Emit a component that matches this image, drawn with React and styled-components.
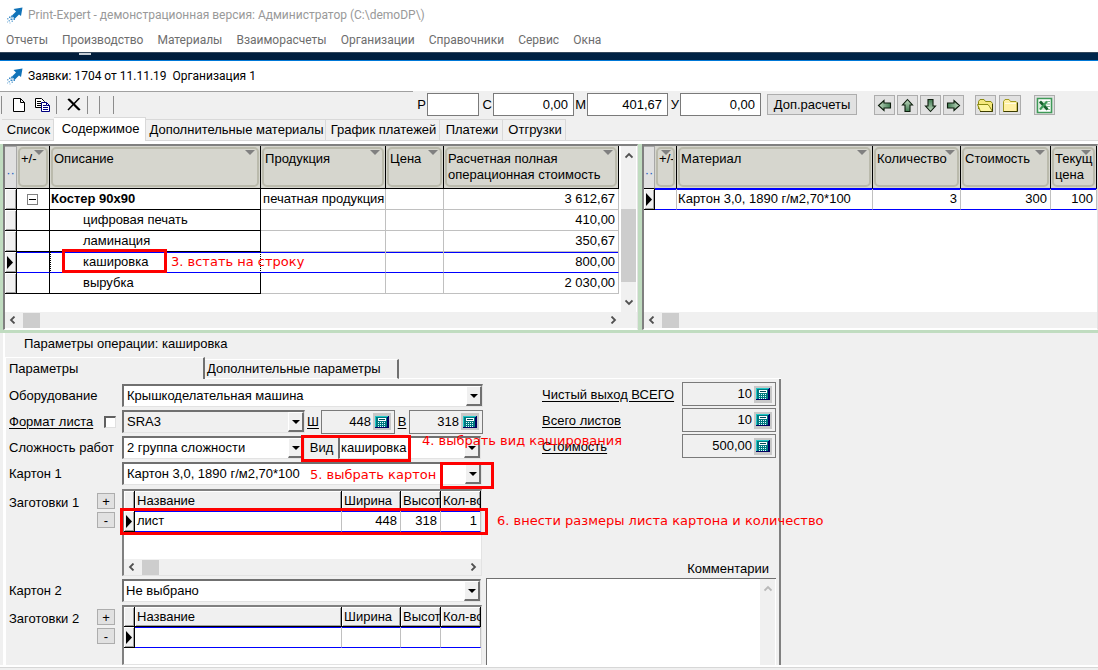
import React from "react";
import styled, { createGlobalStyle, css } from "styled-components";

const GlobalStyle = createGlobalStyle`
  *, *::before, *::after { box-sizing: border-box; }
  body { margin: 0; background: #f0f0f0; }
  body, button, input, select, textarea {
    font-family: "Liberation Sans", Arial, sans-serif;
    font-size: 13px;
    line-height: 16px;
    color: #000;
  }
  button, input, select, textarea { margin: 0; padding: 0; border-radius: 0; }
`;

const App = styled.div`
  display: flex;
  flex-direction: column;
  min-height: 100vh;
`;

/* ---------- window captions and menu ---------- */

const Caption = styled.header`
  display: flex;
  align-items: center;
  gap: 5px;
  height: 30px;
  padding-left: 7px;
  background: #fff;
  color: ${(p) => (p.$inactive ? "#999" : "#000")};
  font: 12px/16px Roboto, sans-serif;
  white-space: pre;
`;

const Menu = styled.nav`
  display: flex;
  align-items: center;
  gap: 14px;
  height: 22px;
  padding: 0 6px 2px;
  background: #fff;
`;

const MenuItem = styled.button`
  border: 0;
  background: none;
  color: #6d6d6d;
  font: 12px/16px Roboto, sans-serif;
`;

const Backdrop = styled.div`
  height: 9px;
  background: linear-gradient(90deg, #001c3a, #00264b);
  border-top: 1px solid #33475c;
  border-bottom: 1px solid #0078d7;
`;

const Sliver = styled.div`
  width: 12px;
  height: 2px;
  margin-left: 79px;
  background: #c5cdd6;
`;

/* ---------- toolbar ---------- */

const Toolbar = styled.div`
  display: flex;
  align-items: center;
  height: 26px;
  background: #f0f0f0;
`;

const ToolGroup = styled.div`
  display: flex;
  align-items: center;
  width: 413px;
  height: 26px;
  padding-left: 1px;
  border-top: 1px solid #a0a0a0;
`;

const Divider = styled.span`
  width: 1px;
  height: 18px;
  margin-right: ${(p) => p.$gap || 0}px;
  background: #8c8c8c;
`;

const FlatButton = styled.button`
  display: flex;
  align-items: center;
  justify-content: center;
  width: ${(p) => p.$w}px;
  height: 22px;
  border: 0;
  background: none;
`;

const TotalLabel = styled.label`
  display: flex;
  align-items: center;
  justify-content: flex-end;
  width: ${(p) => p.$w}px;
  padding-right: 1px;
  padding-top: 2px;
`;

const TotalInput = styled.input`
  width: ${(p) => p.$w}px;
  height: 23px;
  margin-top: 1px;
  padding-right: 5px;
  border: 1px solid #7a7a7a;
  background: #fff;
  text-align: right;
`;

const PushButton = styled.button`
  width: 90px;
  height: 21px;
  margin: 1px 17px 0 6px;
  border: 1px solid #adadad;
  background: #e1e1e1;
`;

const IconButton = styled.button`
  display: flex;
  align-items: center;
  justify-content: center;
  width: ${(p) => p.$w || 21}px;
  height: 20px;
  margin: 2px ${(p) => p.$gap || 2}px 0 0;
  border: 1px solid #adadad;
  background: #e1e1e1;
`;

/* ---------- top tabs ---------- */

const TabStrip = styled.div`
  display: flex;
  align-items: flex-end;
  height: 24px;
  padding-left: 2px;
  border-bottom: 1px solid #d9d9d9;
`;

const Tab = styled.button`
  width: ${(p) => p.$w}px;
  height: 21px;
  border: 1px solid #d9d9d9;
  border-width: 1px 1px 0 0;
  background: #f0f0f0;
  padding-left: 2px;
  white-space: nowrap;
  ${(p) =>
    p.$selected &&
    css`
      height: 24px;
      margin-bottom: -1px;
      padding-bottom: 2px;
      background: #fff;
    `}
`;

/* ---------- grids ---------- */

const Split = styled.div`
  display: grid;
  grid-template-columns: 58% 4px minmax(0, 1fr);
  height: 192px;
  padding: 3px 0 3px 3px;
  background: linear-gradient(#fff 3px, #c0dcc0 3px);
`;

const GridPanel = styled.section`
  display: flex;
  flex-direction: column;
  min-width: 0;
  padding-bottom: 1px;
  overflow: hidden;
  border: solid #808080;
  border-width: 2px 1px 1px 2px;
  border-right-color: #e3e3e3;
  border-bottom-color: #fff;
  background: #fff;
`;

const GridBody = styled.div`
  display: flex;
  flex: 1;
  min-height: 0;
  align-items: stretch;
`;

const TableWrap = styled.div`
  flex: 1;
  min-width: 0;
  padding-right: ${(p) => p.$end || 0}px;
`;

const Table = styled.table`
  width: 100%;
  table-layout: fixed;
  border-collapse: separate;
  border-spacing: 0;
  white-space: nowrap;
`;

const HeadCell = styled.th`
  height: 43px;
  padding: 0;
  border-right: 1px solid #000;
  border-bottom: 1px solid ${(p) => (p.$blue ? "#0000ff" : "#000")};
  background: #d6d6ce;
  font-weight: normal;
  text-align: left;
  vertical-align: top;
`;

const HeadBox = styled.div`
  position: relative;
  height: 40px;
  margin: 1px;
  padding: 2px 0 0 1px;
  overflow: hidden;
  border: 2px solid #babaac;
  border-radius: 5px;
  white-space: pre;
`;

const HeadArrow = styled.span`
  position: absolute;
  top: 1px;
  right: 2px;
  border: 5px solid transparent;
  border-top-color: #808080;
  border-bottom: 0;
`;

const Corner = styled.th`
  padding: 10px 0 0;
  border: 1px solid #a8a8a8;
  border-left: 0;
  border-bottom: 1px solid #000;
  background: #e0e0e0;
  color: #2060c0;
  font-weight: normal;
  line-height: 10px;
  text-align: center;
`;

const Cell = styled.td`
  position: relative;
  height: 21px;
  padding: 0 3px 0 ${(p) => p.$indent || 2}px;
  border-right: 1px solid #c0c0c0;
  border-bottom: 1px solid #c0c0c0;
  font-weight: ${(p) => (p.$bold ? "bold" : "normal")};
  text-align: ${(p) => (p.$right ? "right" : "left")};
  ${(p) => p.$tree && "border-color: #000;"}
  ${(p) => p.$current && "box-shadow: inset 0 1px #0000ff; border-bottom-color: #0000ff;"}
  ${(p) => p.$focus && "border-left: 1px dotted #000; border-right: 1px dotted #000;"}
`;

const Marker = styled.td`
  height: 21px;
  padding: 0;
  border-right: 1px solid #000;
  border-bottom: 1px solid #000;
  background: #f0f0f0;
  box-shadow: inset 1px 1px #fff, inset -1px -1px #a0a0a0;
  line-height: 0;
`;

const TreeToggle = styled.button`
  display: flex;
  align-items: center;
  justify-content: center;
  width: 11px;
  height: 11px;
  margin-left: 8px;
  border: 1px solid #808080;
  background: #fff;

  &::before { content: ""; width: 7px; height: 1px; background: #000; }
`;

const VScroll = styled.div`
  display: flex;
  flex-direction: column;
  justify-content: space-between;
  align-items: center;
  width: 15px;
  margin-right: 1px;
  padding: 6px 0;
  background: #f0f0f0;
`;

const VThumb = styled.div`
  width: 15px;
  height: 73px;
  margin-top: 33px;
  background: #cdcdcd;
`;

const HScroll = styled.div`
  display: flex;
  align-items: center;
  gap: 6px;
  height: 16px;
  padding: 0 ${(p) => p.$end || 4}px 0 4px;
  background: #f0f0f0;
`;

const HThumb = styled.div`
  width: 17px;
  height: 15px;
  margin-right: auto;
  background: #cdcdcd;
`;

/* ---------- operation parameters ---------- */

const Details = styled.main`
  display: flex;
  flex-direction: column;
  flex: 1;
  margin-left: 3px;
  border-left: 2px solid #fff;
`;

const DetailsTitle = styled.h2`
  height: 24px;
  margin: 0;
  padding: 3px 0 0 19px;
  font-size: 13px;
  font-weight: normal;
`;

const PageTabs = styled.div`
  display: flex;
  align-items: flex-end;
  width: 71%;
  height: 22px;
`;

const PageTab = styled.button`
  width: ${(p) => p.$w}px;
  height: ${(p) => (p.$selected ? 22 : 20)}px;
  padding-left: ${(p) => (p.$selected ? 3 : 2)}px;
  border: solid #fff;
  border-width: 1px 2px ${(p) => (p.$selected ? 0 : 1)}px ${(p) => (p.$selected ? 1 : 0)}px;
  border-right-color: #707070;
  background: #f0f0f0;
  text-align: left;
`;

const TabRule = styled.div`
  flex: 1;
  height: 1px;
  background: #fff;
`;

const Page = styled.div`
  display: flex;
  flex: 1;
  width: 71%;
  padding-right: 3px;
  border-left: 1px solid #fff;
  border-right: 2px solid #808080;
`;

const Fields = styled.div`
  display: flex;
  flex-direction: column;
  gap: 3px;
  flex: none;
  width: 478px;
  padding: 5px 0 0 3px;
`;

const Field = styled.div`
  position: relative;
  display: flex;
  align-items: center;
  height: 23px;
`;

const FieldLabel = styled.label`
  width: ${(p) => p.$w}px;
  flex: none;
  text-decoration: ${(p) => (p.$link ? "underline" : "none")};
  text-align: ${(p) => (p.$center ? "center" : "left")};
  text-underline-offset: 2px;
`;

const CheckBox = styled.input`
  appearance: none;
  width: 12px;
  height: 12px;
  margin-right: 6px;
  border: 2px solid #606060;
  border-right: 1px solid #e0e0e0;
  border-bottom: 1px solid #e0e0e0;
  background: #fff;
`;

const ComboBox = styled.div`
  display: flex;
  width: ${(p) => p.$w}px;
  height: 23px;
  border: solid #707070;
  border-width: 2px 1px 1px 2px;
  border-right-color: #e3e3e3;
  border-bottom-color: #e3e3e3;
  background: ${(p) => (p.$gray ? "#f0f0f0" : "#fff")};
`;

const Select = styled.select`
  appearance: none;
  flex: 1;
  min-width: 0;
  padding-left: ${(p) => p.$pad || 3}px;
  border: 0;
  background: transparent;
`;

const DropMark = styled.span`
  display: flex;
  align-items: center;
  justify-content: center;
  width: 16px;
  border: 1px solid #fff;
  border-right: 2px solid #707070;
  border-bottom: 2px solid #707070;
  background: #f0f0f0;

  &::before {
    content: "";
    border: 4px solid transparent;
    border-top-color: #000;
    border-bottom: 0;
  }
`;

const NumberBox = styled.div`
  display: flex;
  align-items: center;
  width: ${(p) => p.$w}px;
  height: 24px;
  padding-right: 3px;
  border: 1px solid #7a7a7a;
  background: #f0f0f0;
`;

const NumberInput = styled.input`
  flex: 1;
  min-width: 0;
  padding-right: 2px;
  border: 0;
  background: none;
  text-align: right;
`;

const CalcButton = styled.button`
  display: flex;
  align-items: center;
  justify-content: center;
  width: 18px;
  height: 17px;
  border: 0;
  background: #c8c8c8;
`;

const ListField = styled.div`
  position: relative;
  display: flex;
  align-items: flex-start;
  flex: ${(p) => (p.$grow ? "1" : "none")};
  height: ${(p) => (p.$grow ? "auto" : "87px")};
  margin-top: ${(p) => (p.$grow ? 0 : 1)}px;
`;

const ListLabel = styled.span`
  width: 88px;
  padding-top: 6px;
`;

const SmallButtons = styled.div`
  display: flex;
  flex-direction: column;
  gap: 3px;
  width: 25px;
  padding-top: 4px;
`;

const SmallButton = styled.button`
  width: 18px;
  height: 16px;
  border: 1px solid #adadad;
  background: #e1e1e1;
  line-height: 13px;
`;

const ListBox = styled.div`
  display: flex;
  flex-direction: column;
  justify-content: space-between;
  align-self: stretch;
  width: 360px;
  border: solid #808080;
  border-width: 2px 1px 1px 2px;
  border-right-color: #e3e3e3;
  border-bottom-color: #e3e3e3;
  background: #fff;
`;

const ListHead = styled.th`
  height: 20px;
  padding: 0 0 0 2px;
  overflow: hidden;
  border-right: 1px solid #000;
  border-bottom: 1px solid #000;
  background: #f0f0f0;
  box-shadow: inset 1px 1px #fff, inset -1px -1px #a0a0a0;
  font-weight: normal;
  text-align: left;
`;

const Results = styled.div`
  display: flex;
  flex: 1;
  flex-direction: column;
  gap: 2px;
  min-width: 0;
  padding: 3px 0 0 2px;
`;

const Result = styled.div`
  display: flex;
  align-items: center;
  justify-content: space-between;
  padding-left: 56px;
`;

const ResultLink = styled.a`
  color: #000;
  text-underline-offset: 2px;
  padding-top: 2px;
`;

const CommentLabel = styled.label`
  margin: 101px 7px 0 auto;
`;

const CommentBox = styled.div`
  display: flex;
  flex: 1;
  margin-top: -1px;
  border: solid #707070;
  border-width: 1px 0 0 1px;
  background: #fff;
`;

const TextArea = styled.textarea`
  flex: 1;
  min-width: 0;
  border: 0;
  resize: none;
  outline: 0;
`;

const StatusBar = styled.footer`
  height: 5px;
  border: solid #fff;
  border-width: 2px 0 0;
  background: linear-gradient(#d7d7d7 1px, #f0f0f0 1px);
`;

/* ---------- red tutorial marks ---------- */

const Frame = styled.span`
  position: absolute;
  z-index: 2;
  left: ${(p) => p.$x}px;
  top: ${(p) => p.$y}px;
  width: ${(p) => p.$w}px;
  height: ${(p) => p.$h}px;
  border: 3px solid #fe0000;
  pointer-events: none;
`;

const Note = styled.span`
  position: absolute;
  z-index: 3;
  left: ${(p) => p.$x}px;
  top: ${(p) => p.$y}px;
  color: #fe0000;
  font: 13px/18px "DejaVu Sans", sans-serif;
  font-weight: normal;
  white-space: nowrap;
  pointer-events: none;
`;

/* ---------- icons ---------- */

const Rocket = () => (
  <svg width="16" height="18" viewBox="0 0 16 18">
    <path d="M15.500 1.500 14 10 12 8.500 8 12.500 6.500 11.500 5 9.500 9 5.500 6.500 3z" fill="#1173b8" />
    <path d="M4 9.500h2v2H4zM6.500 12h1.500v2H6.500zM2 10.500h1.500V12H2zM3.500 12.500h2v1.500h-2z" fill="#3d8cc8" />
    <path d="M0 12h1.500v1.500H0zM1.500 14H3v1.500H1.500zM4.500 14.500H6V16H4.500zM0 15.500h1v1H0zM2.500 16.500h1v1h-1z" fill="#7fb4dc" />
  </svg>
);

const NewDoc = () => (
  <svg width="12" height="14" viewBox="0 0 12 14">
    <path d="M.5.5h7l4 4v9H.5zM7.500.5v4h4" fill="#fff" stroke="#000" />
  </svg>
);

const CopyDoc = () => (
  <svg width="16" height="14" viewBox="0 0 16 14">
    <path d="M.5.5h6l3 3v6h-9z" fill="#fff" stroke="#000" />
    <path d="M2 3.500h4M2 5.500h5M2 7.500h5" stroke="#000" />
    <path d="M6.500 4.500h5l3 3v6h-8z" fill="#fff" stroke="#000080" />
    <path d="M8 7.500h3M8 9.500h5M8 11.500h5M11.500 4.500v3h3" stroke="#000080" fill="none" />
  </svg>
);

const Cross = () => (
  <svg width="14" height="13" viewBox="0 0 14 13">
    <path d="M1 1 12 12M2 1l11 11M12.500 0 1 12" stroke="#000" strokeWidth="1.500" />
  </svg>
);

const ArrowIcon = ({ turn }) => (
  <svg width="15" height="15" viewBox="0 0 15 15">
    <defs>
      <linearGradient id={`arrow${turn}`} x1="0" y1="0" x2="1" y2="0">
        <stop offset="0" stopColor="#c4dcc4" />
        <stop offset="1" stopColor="#3f7a50" />
      </linearGradient>
    </defs>
    <g transform={`rotate(${turn} 7.500 7.500)`}>
      <path
        d="M1.500 7.500 7 2.500v2.500h6.500v5H7v2.500z"
        fill={`url(#arrow${turn})`}
        stroke="#0c1c0c"
        strokeWidth="1.100"
      />
    </g>
  </svg>
);

const Folder = ({ open }) => (
  <svg width="17" height="15" viewBox="0 0 17 15">
    {open ? (
      <>
        <path d="M1.500 11V3.500l1.500-2h4l1.500 2H14l1.500 2V13" fill="#f5e87c" stroke="#8a8a10" />
        <path d="M.5 6.500h10.500l1.500 2 3 5H3.500z" fill="#fdf6a0" stroke="#8a8a10" />
        <path d="M15.500 6v7.500H3" fill="none" stroke="#3c3c00" />
      </>
    ) : (
      <>
        <path d="M1.500 13.500V3.500l1.500-2h4l1.500 2h5.500l1 1v9z" fill="#fff0a4" stroke="#a09a20" />
        <path d="M3 5.500h11" stroke="#fffbe0" />
        <path d="M15.500 4.500v9h-14" fill="none" stroke="#3c3c00" />
      </>
    )}
  </svg>
);

const Excel = () => (
  <svg width="17" height="17" viewBox="0 0 17 17">
    <path d="M1.500 1.500h14v14h-14z" fill="#fff" stroke="#3f9a58" strokeWidth="1.600" />
    <path d="M3 4h8v9H3z" fill="#d8ebd8" />
    <path d="M11 4.500h3M11 7h3M11 9.500h3M11 12.500h3" stroke="#7fb58c" />
    <path d="m4 4.500 7.500 8" stroke="#14602c" strokeWidth="2.600" />
    <path d="M11 4.500l-7 8" stroke="#3c9a58" strokeWidth="2" />
  </svg>
);

const Calculator = () => (
  <svg width="14" height="12" viewBox="0 0 14 12">
    <path d="M0 0h14v12H0z" fill="#000060" />
    <path d="M0 0h13v1H1v10H0z" fill="#20c8c8" />
    <path d="M1 1h11v10H1z" fill="#007880" />
    <path d="M3 2h8v3H3z" fill="#fff" />
    <path d="M4 3h6v1H4z" fill="#004858" />
    <path d="M3 6.500h8M3 8.500h8M3 10.500h8" stroke="#e0ffff" strokeDasharray="1 1" />
  </svg>
);

const turns = { left: 0, up: 90, right: 180, down: 270 };

const Chevron = ({ dir, color = "#505050" }) => (
  <svg width="8" height="8" viewBox="0 0 8 8">
    <path d="M5.500.5 2 4l3.500 3.500" fill="none" stroke={color} strokeWidth="1.800" transform={`rotate(${turns[dir]} 4 4)`} />
  </svg>
);

const CurrentRow = () => (
  <svg width="9" height="13" viewBox="0 0 9 13">
    <path d="M2 0v13l6-6.500z" fill="#000" />
  </svg>
);

/* ---------- composed parts ---------- */

const Head = ({ children, blue }) => (
  <HeadCell $blue={blue}>
    <HeadBox>
      {children}
      <HeadArrow />
    </HeadBox>
  </HeadCell>
);

const Columns = ({ widths }) => (
  <colgroup>
    {widths.map((w, i) => (
      <col key={i} width={w || undefined} />
    ))}
  </colgroup>
);

const HorizontalScroll = ({ end, noEnd }) => (
  <HScroll $end={end}>
    <Chevron dir="left" />
    <HThumb />
    {!noEnd && <Chevron dir="right" />}
  </HScroll>
);

const Combo = ({ id, w, gray, pad, value, label }) => (
  <ComboBox $w={w} $gray={gray}>
    <Select id={id} $pad={pad} aria-label={label}>
      <option>{value}</option>
    </Select>
    <DropMark />
  </ComboBox>
);

const NumberField = ({ id, w, value, label }) => (
  <NumberBox $w={w}>
    <NumberInput id={id} defaultValue={value} aria-label={label} />
    <CalcButton aria-label="Калькулятор">
      <Calculator />
    </CalcButton>
  </NumberBox>
);

const menu = ["Отчеты", "Производство", "Материалы", "Взаиморасчеты", "Организации", "Справочники", "Сервис", "Окна"];

const totals = [
  { name: "Р", gap: 14, w: 52, value: "" },
  { name: "С", gap: 14, w: 81, value: "0,00" },
  { name: "М", gap: 13, w: 81, value: "401,67" },
  { name: "У", gap: 12, w: 81, value: "0,00" },
];

const tabs = [
  ["Список", 52],
  ["Содержимое", 92],
  ["Дополнительные материалы", 180],
  ["График платежей", 114],
  ["Платежи", 63],
  ["Отгрузки", 63],
];

const operations = [
  { name: "Костер 90х90", product: "печатная продукция", cost: "3 612,67", root: true },
  { name: "цифровая печать", cost: "410,00" },
  { name: "ламинация", cost: "350,67" },
  { name: "кашировка", cost: "800,00", current: true },
  { name: "вырубка", cost: "2 030,00" },
];

const results = [
  ["Чистый выход ВСЕГО", "10"],
  ["Всего листов", "10"],
  ["Стоимость", "500,00"],
];

const Operations = () => (
  <GridPanel>
    <GridBody>
      <TableWrap $end={2}>
        <Table>
          <Columns widths={[12, 33, 0, 125, 58, 175]} />
          <thead>
            <tr>
              <Corner>··</Corner>
              <Head>+/-</Head>
              <Head>Описание</Head>
              <Head>Продукция</Head>
              <Head>Цена</Head>
              <Head>{"Расчетная полная\nоперационная стоимость"}</Head>
            </tr>
          </thead>
          <tbody>
            {operations.map((o) => (
              <tr key={o.name}>
                <Marker>{o.current && <CurrentRow />}</Marker>
                <Cell $tree $current={o.current}>{o.root && <TreeToggle aria-label="Свернуть" />}</Cell>
                <Cell
                  $tree
                  $bold={o.root}
                  $indent={o.root ? 1 : o.current ? 32 : 33}
                  $current={o.current}
                  $focus={o.current}
                >
                  {o.name}
                  {o.current && (
                    <>
                      <Frame $x={11} $y={-3} $w={105} $h={24} />
                      <Note $x={120} $y={1}>3. встать на строку</Note>
                    </>
                  )}
                </Cell>
                <Cell $current={o.current}>{o.product}</Cell>
                <Cell $current={o.current} />
                <Cell $right $current={o.current}>{o.cost}</Cell>
              </tr>
            ))}
          </tbody>
        </Table>
      </TableWrap>
      <VScroll>
        <Chevron dir="up" />
        <VThumb />
        <Chevron dir="down" />
      </VScroll>
    </GridBody>
    <HorizontalScroll end={20} />
  </GridPanel>
);

const Materials = () => (
  <GridPanel>
    <GridBody>
      <TableWrap>
        <Table>
          <Columns widths={[11, 22, 0, 88, 90, 46]} />
          <thead>
            <tr>
              <Corner>··</Corner>
              <Head blue>+/-</Head>
              <Head blue>Материал</Head>
              <Head blue>Количество</Head>
              <Head blue>Стоимость</Head>
              <Head blue>{"Текущ\nцена"}</Head>
            </tr>
          </thead>
          <tbody>
            <tr>
              <Marker><CurrentRow /></Marker>
              <Cell $current />
              <Cell $current $indent={1}>Картон 3,0, 1890 г/м2,70*100</Cell>
              <Cell $current $right>3</Cell>
              <Cell $current $right>300</Cell>
              <Cell $current $right>100</Cell>
            </tr>
          </tbody>
        </Table>
      </TableWrap>
    </GridBody>
    <HorizontalScroll noEnd />
  </GridPanel>
);

const Blanks = ({ row, scroll }) => (
  <ListBox>
    <Table>
      <Columns widths={[11, 0, 59, 40, 40]} />
      <thead>
        <tr>
          <ListHead />
          <ListHead>Название</ListHead>
          <ListHead>Ширина</ListHead>
          <ListHead>Высота</ListHead>
          <ListHead>Кол-во</ListHead>
        </tr>
      </thead>
      <tbody>
        <tr>
          <Marker><CurrentRow /></Marker>
          <Cell $current>{row[0]}</Cell>
          <Cell $current $right>{row[1]}</Cell>
          <Cell $current $right>{row[2]}</Cell>
          <Cell $current $right>{row[3]}</Cell>
        </tr>
      </tbody>
    </Table>
    {scroll && <HorizontalScroll />}
  </ListBox>
);

const AddRemove = () => (
  <SmallButtons>
    <SmallButton>+</SmallButton>
    <SmallButton>-</SmallButton>
  </SmallButtons>
);

export default function PrintExpert() {
  return (
    <App>
      <GlobalStyle />
      <Caption $inactive>
        <Rocket />
        Print-Expert - демонстрационная версия: Администратор (C:\demoDP\)
      </Caption>
      <Menu>
        {menu.map((m) => (
          <MenuItem key={m}>{m}</MenuItem>
        ))}
      </Menu>
      <Backdrop><Sliver /></Backdrop>
      <Caption>
        <Rocket />
        {"Заявки: 1704 от 11.11.19  Организация 1"}
      </Caption>

      <Toolbar>
        <ToolGroup>
          <Divider $gap={6} />
          <FlatButton $w={22} aria-label="Новая"><NewDoc /></FlatButton>
          <FlatButton $w={26} aria-label="Копировать"><CopyDoc /></FlatButton>
          <Divider $gap={3} />
          <FlatButton $w={27} aria-label="Удалить"><Cross /></FlatButton>
          <Divider $gap={11} />
          <Divider $gap={13} />
          <Divider />
        </ToolGroup>
        {totals.map((t) => (
          <React.Fragment key={t.name}>
            <TotalLabel $w={t.gap} htmlFor={`total-${t.name}`}>{t.name}</TotalLabel>
            <TotalInput id={`total-${t.name}`} $w={t.w} defaultValue={t.value} />
          </React.Fragment>
        ))}
        <PushButton>Доп.расчеты</PushButton>
        <IconButton aria-label="Назад"><ArrowIcon turn={0} /></IconButton>
        <IconButton aria-label="Вверх"><ArrowIcon turn={90} /></IconButton>
        <IconButton aria-label="Вниз"><ArrowIcon turn={270} /></IconButton>
        <IconButton aria-label="Вперед" $gap={11}><ArrowIcon turn={180} /></IconButton>
        <IconButton aria-label="Открыть" $gap={3}><Folder open /></IconButton>
        <IconButton aria-label="Папка" $w={22} $gap={13}><Folder /></IconButton>
        <IconButton aria-label="Excel"><Excel /></IconButton>
      </Toolbar>

      <TabStrip role="tablist">
        {tabs.map(([name, w], i) => (
          <Tab key={name} role="tab" $w={w} $selected={i === 1} aria-selected={i === 1}>
            {name}
          </Tab>
        ))}
      </TabStrip>

      <Split>
        <Operations />
        <span />
        <Materials />
      </Split>

      <Details>
        <DetailsTitle>Параметры операции: кашировка</DetailsTitle>
        <PageTabs role="tablist">
          <PageTab role="tab" $w={200} $selected aria-selected>Параметры</PageTab>
          <PageTab role="tab" $w={194}>Дополнительные параметры</PageTab>
          <TabRule />
        </PageTabs>
        <Page>
          <Fields>
            <Field>
              <FieldLabel $w={113} htmlFor="equipment">Оборудование</FieldLabel>
              <Combo id="equipment" w={361} value="Крышкоделательная машина" />
            </Field>
            <Field>
              <FieldLabel $w={95} $link htmlFor="own-format">Формат листа</FieldLabel>
              <CheckBox type="checkbox" id="own-format" />
              <Combo w={183} gray value="SRA3" label="Формат" />
              <FieldLabel $w={16} $link $center htmlFor="width">Ш</FieldLabel>
              <NumberField id="width" w={74} value="448" />
              <FieldLabel $w={14} $link $center htmlFor="height">В</FieldLabel>
              <NumberField id="height" w={74} value="318" />
            </Field>
            <Field>
              <FieldLabel $w={113} htmlFor="difficulty">Сложность работ</FieldLabel>
              <Combo id="difficulty" w={183} value="2 группа сложности" />
              <FieldLabel $w={33} $center htmlFor="kind">Вид</FieldLabel>
              <Combo id="kind" w={143} pad={1} value="кашировка" />
              <Frame $x={292} $y={-1} $w={110} $h={27} />
              <Note $x={413} $y={-4}>4. выбрать вид каширования</Note>
            </Field>
            <Field>
              <FieldLabel $w={113} htmlFor="board-1">Картон 1</FieldLabel>
              <Combo id="board-1" w={360} value="Картон 3,0, 1890 г/м2,70*100" />
              <Note $x={301} $y={4}>5. выбрать картон</Note>
              <Frame $x={431} $y={0} $w={54} $h={27} />
            </Field>
            <ListField>
              <ListLabel>Заготовки 1</ListLabel>
              <AddRemove />
              <Blanks row={["лист", "448", "318", "1"]} scroll />
              <Frame $x={111} $y={19} $w={368} $h={27} />
              <Note $x={488} $y={23}>6. внести размеры листа картона и количество</Note>
            </ListField>
            <Field>
              <FieldLabel $w={113} htmlFor="board-2">Картон 2</FieldLabel>
              <Combo id="board-2" w={359} pad={2} value="Не выбрано" />
            </Field>
            <ListField $grow>
              <ListLabel>Заготовки 2</ListLabel>
              <AddRemove />
              <Blanks row={["", "", "", ""]} />
            </ListField>
          </Fields>
          <Results>
            {results.map(([name, value]) => (
              <Result key={name}>
                <ResultLink href="#">{name}</ResultLink>
                <NumberField w={94} value={value} label={name} />
              </Result>
            ))}
            <CommentLabel htmlFor="comment">Комментарии</CommentLabel>
            <CommentBox>
              <TextArea id="comment" rows={1} />
              <VScroll>
                <Chevron dir="up" color="#b8b8b8" />
              </VScroll>
            </CommentBox>
          </Results>
        </Page>
      </Details>
      <StatusBar />
    </App>
  );
}
